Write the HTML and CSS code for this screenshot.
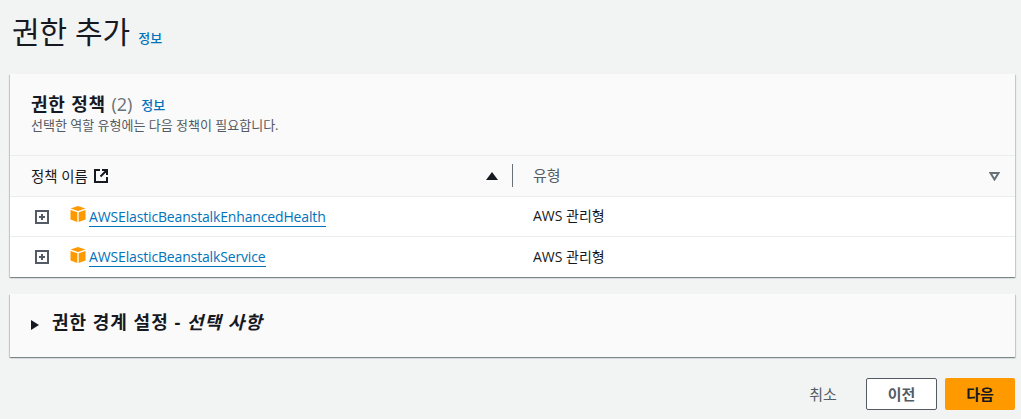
FILE: index.html
```html
<!DOCTYPE html>
<html lang="ko">
<head>
<meta charset="utf-8">
<title>권한 추가</title>
<link rel="stylesheet" href="styles.css">
</head>
<body>
<header class="page-head">
  <h1 class="page-title">권한 추가</h1>
  <a class="info" href="#">정보</a>
</header>
<section class="card">
  <div class="card-head">
    <div class="card-title-row">
      <h2 class="card-title">권한 정책 <span class="count">(2)</span></h2>
      <a class="info" href="#">정보</a>
    </div>
    <p class="card-desc">선택한 역할 유형에는 다음 정책이 필요합니다.</p>
  </div>
  <div class="thead">
    <div class="th th-name">
      <span class="th-label">정책 이름</span>
      <svg class="ext" viewBox="0 0 14 14" width="14" height="14"><path d="M6 1H1v12h12V8M6.500 7.500L12.500 1.500M8 1h5v5" fill="none" stroke="#16191f" stroke-width="2"/></svg>
      <svg class="sort-up" viewBox="0 0 12 8" width="12" height="8"><path d="M6 0l6 8H0z" fill="#16191f"/></svg>
    </div>
    <div class="th th-type">
      <span class="th-type-label">유형</span>
      <svg class="sort-down" viewBox="0 0 11 9" width="11" height="9"><path d="M1.500 1h8L5.500 7.500z" fill="none" stroke="#687078" stroke-width="2"/></svg>
    </div>
  </div>
  <div class="row">
    <div class="cell-name">
      <svg class="expand" viewBox="0 0 14 14" width="14" height="14"><path d="M1 1h12v12H1zM7 4v6M4 7h6" fill="none" stroke="#545b64" stroke-width="2"/></svg>
      <svg class="cube" viewBox="0 0 16 16" width="16" height="16"><path d="M8 0l7.500 2.500L8 5 .5 2.500z" fill="#f90"/><path d="M.5 4L7.300 6.300V16L.5 13.500zM15.500 4L8.700 6.300V16l6.800-2.500z" fill="#f90"/></svg>
      <a class="policy" href="#">AWSElasticBeanstalkEnhancedHealth</a>
    </div>
    <div class="cell-type">AWS 관리형</div>
  </div>
  <div class="row">
    <div class="cell-name">
      <svg class="expand" viewBox="0 0 14 14" width="14" height="14"><path d="M1 1h12v12H1zM7 4v6M4 7h6" fill="none" stroke="#545b64" stroke-width="2"/></svg>
      <svg class="cube" viewBox="0 0 16 16" width="16" height="16"><path d="M8 0l7.500 2.500L8 5 .5 2.500z" fill="#f90"/><path d="M.5 4L7.300 6.300V16L.5 13.500zM15.500 4L8.700 6.300V16l6.800-2.500z" fill="#f90"/></svg>
      <a class="policy" href="#">AWSElasticBeanstalkService</a>
    </div>
    <div class="cell-type">AWS 관리형</div>
  </div>
</section>
<section class="card boundary">
  <svg class="caret" viewBox="0 0 8 10" width="8" height="10"><path d="M0 0l8 5-8 5z" fill="#16191f"/></svg>
  <h2 class="boundary-title">권한 경계 설정 - <em>선택 사항</em></h2>
</section>
<footer class="actions">
  <button class="btn btn-link" type="button">취소</button>
  <button class="btn btn-normal" type="button">이전</button>
  <button class="btn btn-primary" type="button">다음</button>
</footer>
</body>
</html>
```
FILE: styles.css
```css
* { box-sizing: border-box; }
html, body { margin: 0; height: 100%; }
body {
  background: #f2f3f3;
  color: #16191f;
  font-family: "Open Sans", "Noto Sans CJK KR", sans-serif;
  font-size: 14px;
  padding: 0 6px 0 10px;
  overflow: hidden;
}
a { color: #0073bb; text-decoration: none; }
h1, h2, p { margin: 0; font-weight: 400; }
.page-head {
  height: 74px;
  display: flex;
  align-items: flex-start;
  gap: 8px;
  padding: 12px 0 0 2px;
}
.page-title { font-size: 30px; line-height: 40px; }
.info { font-size: 13px; line-height: 16px; font-weight: 500; }
.page-head .info { margin-top: 18px; }
.card {
  background: #fff;
  box-shadow: 0 1px 1px 0 rgba(0, 28, 36, .3), 1px 1px 1px 0 rgba(0, 28, 36, .15), -1px 1px 1px 0 rgba(0, 28, 36, .15);
}
.card-head {
  height: 82px;
  background: #fafafa;
  padding: 18px 20px 0 21px;
  border-bottom: 1px solid #eaeded;
}
.card-title-row { display: flex; align-items: center; gap: 9px; height: 24px; }
.card-title { font-size: 18px; font-weight: 700; line-height: 24px; letter-spacing: .8px; }
.card-title-row .info { margin-top: 1px; }
.count { color: #687078; font-weight: 400; letter-spacing: 0; }
.card-desc { font-size: 13px; line-height: 16px; color: #545b64; margin-top: 1px; }
.thead {
  display: flex;
  height: 41px;
  background: #fafafa;
  border-bottom: 1px solid #eaeded;
  align-items: center;
}
.th { display: flex; align-items: center; height: 100%; }
.th-name {
  width: 503px;
  padding-left: 21px;
  padding-bottom: 1px;
}
.th-label { color: #16191f; font-size: 14.400px; margin-top: -1px; }
.ext { margin-left: 6px; margin-top: 1px; }
.sort-up { margin-left: auto; margin-right: 14px; }
.th-name::after {
  content: "";
  width: 1px;
  height: 23px;
  background: #687078;
}
.th-type {
  flex: 1;
  padding: 0 15px 1px 20px;
  justify-content: space-between;
  color: #545b64;
  font-size: 15px;
}
.th-type-label { margin-top: -2px; }
.sort-down { margin-top: 1px; }
.row {
  display: flex;
  align-items: center;
  height: 40px;
  border-bottom: 1px solid #eaeded;
  background: #fff;
}
.row:last-child { border-bottom: 0; }
.cell-name { width: 503px; display: flex; align-items: center; padding-left: 25px; }
.expand { margin-right: 21px; }
.cube { margin-right: 3px; margin-top: -5px; }
.policy { border-bottom: 1px solid #0073bb; line-height: 18px; letter-spacing: -.15px; padding-top: 1px; }
.cell-type { padding: 0 0 3px 20px; }
.boundary {
  margin-top: 17px;
  height: 63px;
  background: #fafafa;
  display: flex;
  align-items: center;
  padding-left: 21px;
  gap: 13px;
}
.caret { margin-top: -2px; }
.boundary-title { font-size: 18px; font-weight: 700; line-height: 24px; margin-top: -8px; letter-spacing: 1px; }
.actions {
  display: flex;
  justify-content: flex-end;
  align-items: center;
  margin-top: 21px;
  gap: 8px;
}
.btn {
  height: 32px;
  border-radius: 2px;
  font: 700 15px/20px "Open Sans", "Noto Sans CJK KR", sans-serif;
  padding: 0;
  width: 70px;
  border: 1px solid transparent;
}
.btn-link { background: none; color: #545b64; font-weight: 400; }
.btn-normal { background: #fff; border-color: #545b64; color: #545b64; width: 71px; }
.btn-primary { background: #f90; color: #16191f; }
```
